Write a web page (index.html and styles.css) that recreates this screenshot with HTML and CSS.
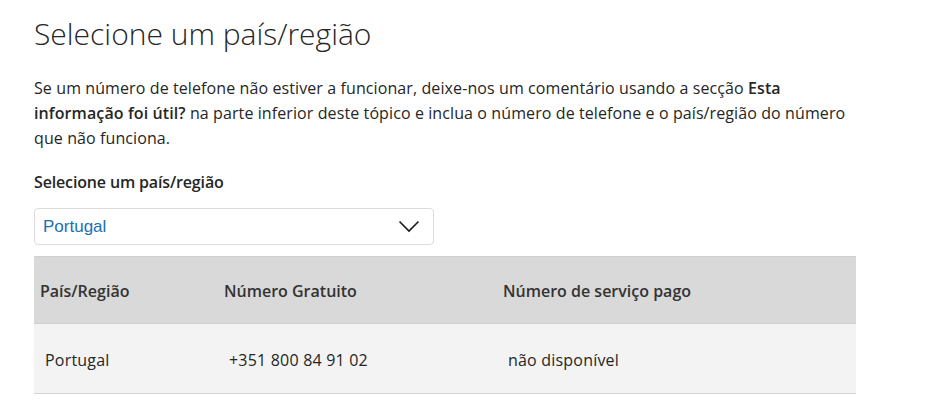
FILE: index.html
```html
<!DOCTYPE html>
<html lang="pt">
<head>
<meta charset="utf-8">
<title>Selecione um país/região</title>
<link rel="stylesheet" href="styles.css">
</head>
<body>
<main class="page">
  <h1 class="title">Selecione um país/região</h1>
  <p class="intro">Se um número de telefone não estiver a funcionar, deixe-nos um comentário usando a secção <b>Esta informação foi útil?</b> na parte inferior deste tópico e inclua o número de telefone e o país/região do número que não funciona.</p>
  <div class="label">Selecione um país/região</div>
  <div class="select">
    <span class="select-value">Portugal</span>
    <svg class="chevron" width="22" height="13" viewBox="0 0 22 13" aria-hidden="true"><path d="M1.5 1.5 L11 11 L20.5 1.5" fill="none" stroke="#1a1a1a" stroke-width="1.6"/></svg>
  </div>
  <table class="numbers">
    <thead>
      <tr><th class="c1">País/Região</th><th class="c2">Número Gratuito</th><th class="c3">Número de serviço pago</th></tr>
    </thead>
    <tbody>
      <tr><td>Portugal</td><td>+351 800 84 91 02</td><td>não disponível</td></tr>
    </tbody>
  </table>
</main>
</body>
</html>
```
FILE: styles.css
```css
html, body { margin: 0; padding: 0; background: #fff; }
body {
  font-family: "Open Sans", "Noto Sans", sans-serif;
  color: #262626;
}
.page { padding: 0 0 0 34px; width: 822px; }
.title {
  margin: 0;
  padding-top: 14px;
  font-size: 30px;
  font-weight: 300;
  line-height: 40px;
  color: #262626;
}
.intro {
  margin: 22px 0 0 0;
  font-size: 16px;
  line-height: 25px;
  width: 822px;
  letter-spacing: 0.1px;
}
.intro b { font-weight: 600; }
.label {
  margin-top: 20px;
  font-size: 16px;
  font-weight: 600;
  line-height: 22px;
  letter-spacing: -0.15px;
}
.select {
  margin-top: 15px;
  height: 35px;
  border: 1px solid #dcdcdc;
  border-radius: 4px;
  display: flex;
  align-items: center;
  justify-content: space-between;
  padding: 0 13px 0 8px;
  box-sizing: content-box;
  width: 377px;
}
.select-value {
  font-family: "Liberation Sans", Arial, sans-serif;
  font-size: 17px;
  color: #1a6fb5;
}
.chevron { display: block; }
.numbers {
  margin-top: 11px;
  width: 822px;
  border-collapse: collapse;
  font-size: 16px;
}
.numbers th {
  background: #d9d9d9;
  border-top: 1px solid #d0d0d0;
  border-bottom: 1px solid #cfcfcf;
  height: 64px;
  padding: 2px 6px 0;
  text-align: left;
  font-weight: 600;
  color: #333;
}
.numbers td {
  background: #f3f3f3;
  border-bottom: 1px solid #d5d5d5;
  height: 66px;
  padding: 3px 11px 0;
  text-align: left;
  color: #262626;
  letter-spacing: 0.2px;
}
.c1 { width: 172px; }
.c2 { width: 267px; }
```
